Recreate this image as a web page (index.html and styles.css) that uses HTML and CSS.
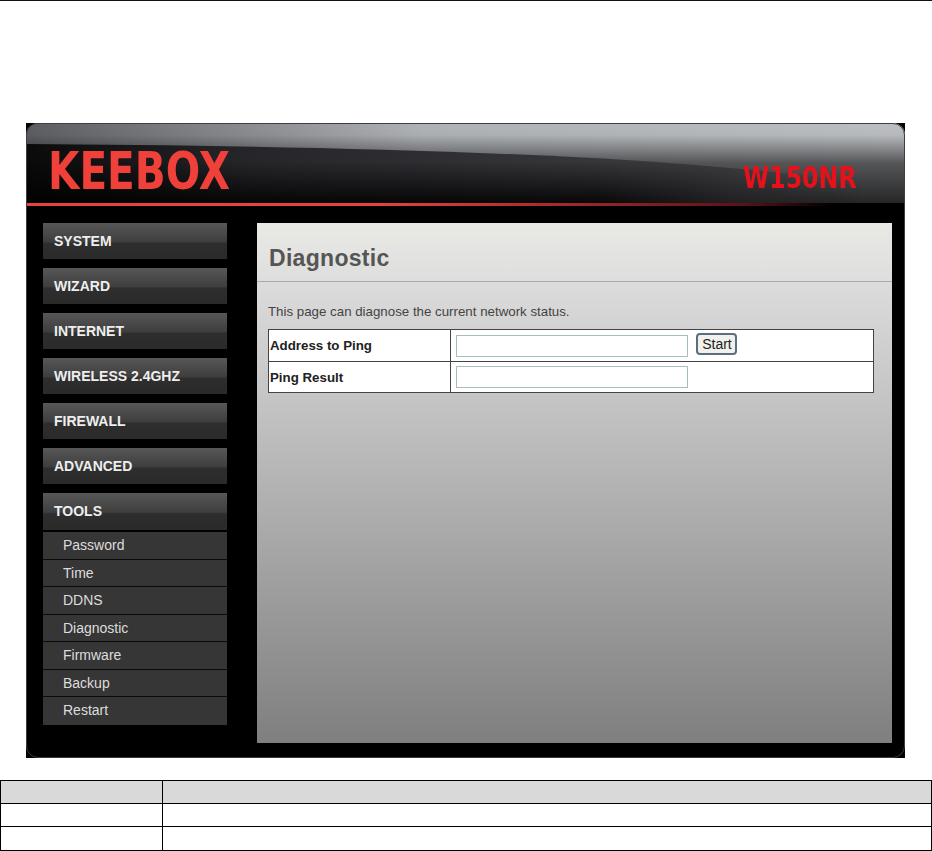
FILE: index.html
```html
<!DOCTYPE html>
<html lang="en">
<head>
    <meta charset="UTF-8">
    <title>Diagnostic</title>
    <link rel="stylesheet" href="styles.css">
</head>
<body>
    <div class="top-rule"></div>

    <div class="router">
        <div class="router-header">
            <svg class="header-art" width="879" height="80" viewBox="0 0 879 80">
                <defs>
                    <linearGradient id="sheen" x1="0" y1="0" x2="1" y2="0">
                        <stop offset="0" stop-color="#5c5e62"/>
                        <stop offset="0.22" stop-color="#85878b"/>
                        <stop offset="0.45" stop-color="#b0b3b7"/>
                        <stop offset="1" stop-color="#bcbfc3"/>
                    </linearGradient>
                    <linearGradient id="fade" x1="0" y1="0" x2="0" y2="1">
                        <stop offset="0" stop-color="#000" stop-opacity="0"/>
                        <stop offset="0.15" stop-color="#000" stop-opacity="0.03"/>
                        <stop offset="0.5" stop-color="#000" stop-opacity="0.55"/>
                        <stop offset="1" stop-color="#000" stop-opacity="0.8"/>
                    </linearGradient>
                    <linearGradient id="swoosh" x1="0" y1="0" x2="1" y2="0">
                        <stop offset="0" stop-color="#0a0a0a"/>
                        <stop offset="0.25" stop-color="#26262a"/>
                        <stop offset="0.55" stop-color="#323236"/>
                        <stop offset="0.8" stop-color="#3a3a3e" stop-opacity="0.9"/>
                        <stop offset="0.92" stop-color="#3a3a3e" stop-opacity="0"/>
                    </linearGradient>
                    <linearGradient id="floor" x1="0" y1="0" x2="0" y2="1">
                        <stop offset="0.3" stop-color="#000" stop-opacity="0"/>
                        <stop offset="1" stop-color="#000" stop-opacity="0.85"/>
                    </linearGradient>
                    <linearGradient id="floor-reach" x1="0" y1="0" x2="1" y2="0">
                        <stop offset="0.65" stop-color="#fff"/>
                        <stop offset="0.95" stop-color="#000"/>
                    </linearGradient>
                    <mask id="floor-mask">
                        <rect width="879" height="80" fill="url(#floor-reach)"/>
                    </mask>
                </defs>
                <rect width="879" height="80" fill="url(#sheen)"/>
                <rect width="879" height="80" fill="url(#fade)"/>
                <path d="M0 21 C180 22 420 26 600 37 C680 42 760 50 879 62 V80 H0 Z" fill="url(#swoosh)"/>
                <path d="M0 21 C180 22 420 26 600 37 C680 42 760 50 879 62 V80 H0 Z" fill="url(#floor)" mask="url(#floor-mask)"/>
            </svg>
            <div class="logo"><span>KEEBOX</span></div>
            <div class="model"><span>W150NR</span></div>
        </div>
        <div class="red-line"></div>

        <div class="router-body">
            <nav class="sidebar">
                <a class="menu-btn">SYSTEM</a>
                <a class="menu-btn">WIZARD</a>
                <a class="menu-btn">INTERNET</a>
                <a class="menu-btn">WIRELESS 2.4GHZ</a>
                <a class="menu-btn">FIREWALL</a>
                <a class="menu-btn">ADVANCED</a>
                <a class="menu-btn">TOOLS</a>
                <div class="submenu">
                    <a class="sub-item">Password</a>
                    <a class="sub-item">Time</a>
                    <a class="sub-item">DDNS</a>
                    <a class="sub-item">Diagnostic</a>
                    <a class="sub-item">Firmware</a>
                    <a class="sub-item">Backup</a>
                    <a class="sub-item">Restart</a>
                </div>
            </nav>

            <main class="panel">
                <div class="panel-title">Diagnostic</div>
                <div class="panel-body">
                    <p class="intro">This page can diagnose the current network status.</p>
                    <table class="ping-table">
                        <tr class="ping-first">
                            <th>Address to Ping</th>
                            <td>
                                <input type="text" class="text-field">
                                <button class="start-btn">Start</button>
                            </td>
                        </tr>
                        <tr>
                            <th>Ping Result</th>
                            <td><input type="text" class="text-field"></td>
                        </tr>
                    </table>
                </div>
            </main>
        </div>
    </div>

    <table class="doc-table">
        <tr class="doc-head"><td class="doc-first"></td><td></td></tr>
        <tr><td class="doc-first"></td><td></td></tr>
        <tr class="doc-last"><td class="doc-first"></td><td></td></tr>
    </table>
</body>
</html>
```

FILE: styles.css
```css
html, body {
    margin: 0;
    padding: 0;
    background: white;
}
body {
    font-family: "Liberation Sans", Arial, sans-serif;
    height: 851px;
    overflow: hidden;
}
.top-rule {
    height: 1px;
    background: #111;
    margin-bottom: 122px;
}
.router {
    position: relative;
    width: 879px;
    height: 635px;
    margin-left: 26px;
    background: #000;
}
/* thin rounded edge, the corners outside it stay black */
.router::after {
    content: "";
    position: absolute;
    top: 0;
    left: 0;
    right: 0;
    bottom: 0;
    border: 1px solid #3e3e3e;
    border-radius: 12px;
    pointer-events: none;
}
.router-header {
    position: relative;
    height: 80px;
    display: flex;
    justify-content: space-between;
    align-items: flex-start;
    border-radius: 12px 12px 0 0;
    overflow: hidden;
}
.header-art {
    position: absolute;
    left: 0;
    top: 0;
}
.logo {
    position: relative;
    margin: 30px 0 0 22px;
    width: 181px;
    height: 38px;
    color: #ef4039;
    font-family: "DejaVu Sans", sans-serif;
    font-size: 51px;
    font-weight: bold;
    line-height: 38px;
}
.logo span {
    display: inline-block;
    transform: scaleX(0.795);
    transform-origin: left center;
}
.model {
    position: relative;
    margin: 44px 48px 0 0;
    width: 114px;
    height: 22px;
    color: #e5121b;
    font-family: "DejaVu Sans", sans-serif;
    font-size: 30px;
    font-weight: bold;
    line-height: 22px;
}
.model span {
    display: inline-block;
    transform: scaleX(0.79);
    transform-origin: left center;
}
.red-line {
    height: 3px;
    background: linear-gradient(to right, #ea4040 0, #ea4040 40%, #8c2226 68%, #5a1015 82%, #000 92%);
}
.router-body {
    display: flex;
    align-items: flex-start;
    padding: 17px 13px 0 17px;
}
.sidebar {
    width: 184px;
    margin-right: 30px;
}
.menu-btn {
    display: block;
    box-sizing: border-box;
    height: 36px;
    margin-bottom: 9px;
    padding-left: 11px;
    line-height: 36px;
    color: #eee;
    font-size: 14px;
    font-weight: bold;
    background: linear-gradient(to bottom, #575757 0, #3e3e3e 52%, #2e2e2e 56%, #2a2a2a 100%);
}
.menu-btn:nth-child(7) {
    height: 37px;
    margin-bottom: 2px;
}
.sub-item {
    display: block;
    box-sizing: border-box;
    height: 27.5px;
    padding-left: 20px;
    line-height: 26.5px;
    color: #ddd;
    font-size: 14px;
    background: #363636;
    border-bottom: 1px solid #0a0a0a;
}
.sub-item:last-child {
    border-bottom: 0;
}
.panel {
    width: 635px;
    height: 520px;
}
.panel-title {
    box-sizing: border-box;
    height: 59px;
    padding: 22px 0 0 12px;
    color: #555;
    font-size: 23px;
    font-weight: bold;
    letter-spacing: 0.3px;
    line-height: 26px;
    background: linear-gradient(to bottom, #e9e9e5, #dedede);
    border-bottom: 1px solid #aaa;
}
.panel-body {
    height: 461px;
    padding: 0 18px 0 11px;
    background: linear-gradient(to bottom, #dcdcdc, #7f7f7f);
}
.intro {
    margin: 0;
    padding-top: 22px;
    height: 25px;
    line-height: 16px;
    color: #444;
    font-size: 13.3px;
}
.ping-table {
    width: 606px;
    border-collapse: collapse;
    background: white;
}
.ping-table th,
.ping-table td {
    height: 30px;
    padding: 0;
    border: 1px solid #444;
}
.ping-first th,
.ping-first td {
    height: 31px;
}
.ping-table th {
    width: 180px;
    padding-left: 1px;
    text-align: left;
    color: #222;
    font-size: 13.3px;
}
.ping-table td {
    padding-left: 5px;
}
.text-field {
    box-sizing: border-box;
    width: 232px;
    height: 22px;
    padding: 0;
    border: 1px solid #a9bcc0;
    background: white;
    vertical-align: middle;
}
.start-btn {
    box-sizing: border-box;
    width: 41px;
    height: 22px;
    margin: 0 0 3px 4px;
    padding: 0;
    color: #222;
    font-family: "Liberation Sans", Arial, sans-serif;
    font-size: 14px;
    background: #f1f1ee;
    border: 2px solid #5d6f7c;
    border-radius: 4px;
    vertical-align: middle;
}
.doc-table {
    width: 932px;
    margin-top: 22px;
    border-collapse: collapse;
    table-layout: fixed;
}
.doc-table td {
    height: 22px;
    padding: 0;
    border: 1px solid #000;
}
.doc-first {
    width: 161px;
}
.doc-head td {
    background: #d9d9d9;
}
.doc-last td {
    height: 23px;
}
```
